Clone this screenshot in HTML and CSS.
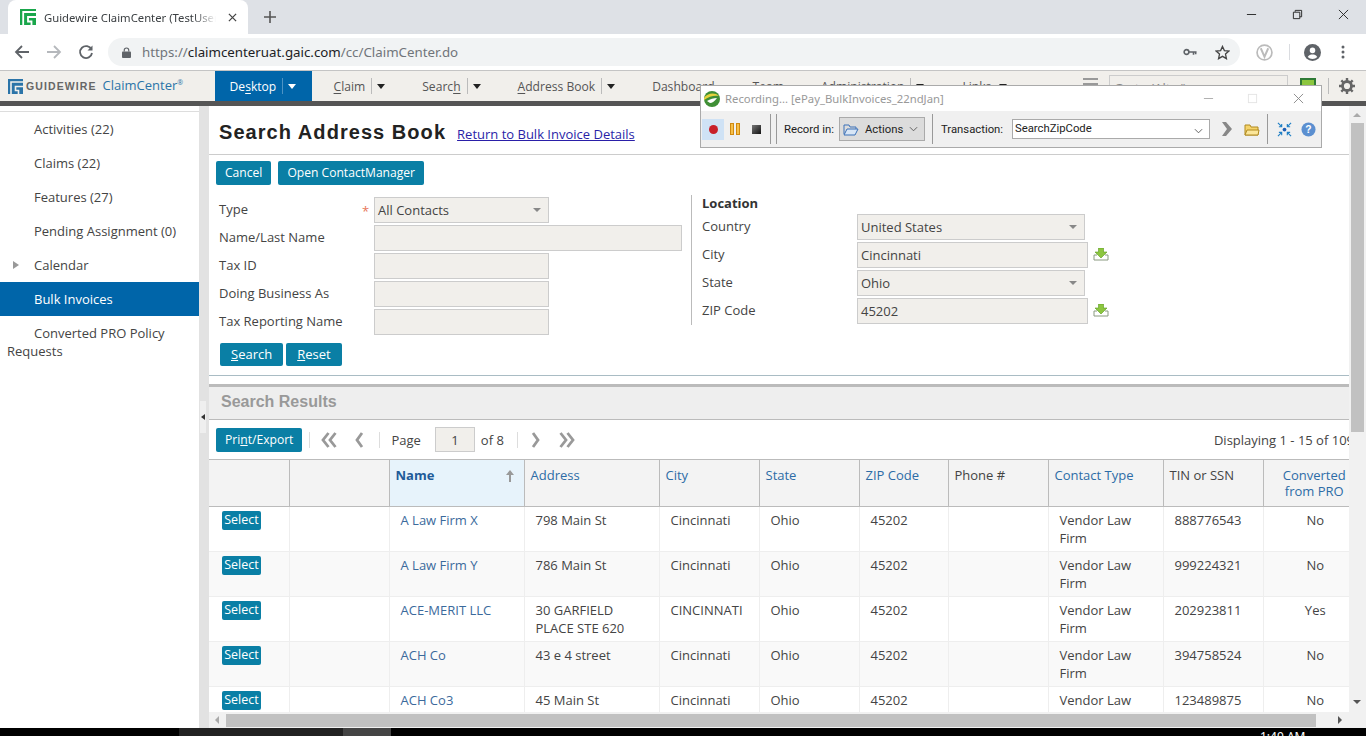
FILE: index.html
```html
<!DOCTYPE html>
<html>
<head>
	<title>Guidewire ClaimCenter</title>
	<link rel="stylesheet" href="styles.css">
</head>
<body>
	<!-- browser chrome -->
	<div class="tabstrip">
		<div class="tab">
			<svg class="favicon" viewBox="0 0 16 16"><rect width="16" height="16" fill="#1aa64b"/><path d="M16 3H3.200V16M16 8H8V12.500H11.500V16" fill="none" stroke="#fff" stroke-width="1.800"/></svg>
			<span class="tab-title">Guidewire ClaimCenter (TestUser</span>
			<svg class="tab-close" viewBox="0 0 10 10"><path d="M1 1l8 8M9 1l-8 8" stroke="#444" stroke-width="1.400"/></svg>
		</div>
		<svg class="tab-new" viewBox="0 0 12 12"><path d="M6 0v12M0 6h12" stroke="#555" stroke-width="1.600"/></svg>
		<div class="window-btns">
			<svg viewBox="0 0 12 12"><path d="M1 6h10" stroke="#222"/></svg>
			<svg viewBox="0 0 12 12"><path d="M3.500 3V1.500H10.500V8.500H8.500M1.500 3.500H8.500V10.500H1.500Z" fill="none" stroke="#222"/></svg>
			<svg viewBox="0 0 12 12"><path d="M1 1l10 10M11 1L1 11" stroke="#222"/></svg>
		</div>
	</div>
	<div class="toolbar">
		<svg class="tool-icon" viewBox="0 0 16 16"><path d="M15 8H2M8 2L2 8l6 6" fill="none" stroke="#5f6368" stroke-width="1.800"/></svg>
		<svg class="tool-icon" viewBox="0 0 16 16"><path d="M1 8h13M8 2l6 6-6 6" fill="none" stroke="#b5b8bc" stroke-width="1.800"/></svg>
		<svg class="tool-icon" viewBox="0 0 16 16"><path d="M13.500 5.500A6 6 0 1 0 14 9" fill="none" stroke="#5f6368" stroke-width="1.800"/><path d="M14.500 1.500V6.500H9.500Z" fill="#5f6368"/></svg>
		<div class="omnibox">
			<svg class="lock" viewBox="0 0 10 12"><path d="M2.500 5V3.500a2.500 2.500 0 0 1 5 0V5" fill="none" stroke="#5f6368" stroke-width="1.300"/><rect y="5" width="10" height="7" rx="1" fill="#5f6368"/></svg>
			<span class="url"><span class="url-dim">https://</span>claimcenteruat.gaic.com<span class="url-dim">/cc/ClaimCenter.do</span></span>
			<svg class="key" viewBox="0 0 16 8"><circle cx="4" cy="4" r="2.700" fill="none" stroke="#5f6368" stroke-width="1.800"/><path d="M6.500 4H15.500M12 4V7M14.500 4V6.500" stroke="#5f6368" stroke-width="1.800" fill="none"/></svg>
			<svg class="star" viewBox="0 0 16 16"><path d="M8 1.500l2 4.500 4.800.5-3.600 3.200 1 4.800L8 12.100 3.800 14.500l1-4.800L1.200 6.500 6 6z" fill="none" stroke="#444" stroke-width="1.400"/></svg>
		</div>
		<svg class="ext" viewBox="0 0 16 16"><circle cx="8" cy="8" r="7" fill="none" stroke="#bbb" stroke-width="1.600"/><path d="M4.500 4l3.500 8 3.500-8" fill="none" stroke="#bbb" stroke-width="1.800"/></svg>
		<span class="tool-sep"></span>
		<svg class="avatar" viewBox="0 0 16 16"><circle cx="8" cy="8" r="8" fill="#5f6368"/><circle cx="8" cy="6" r="2.600" fill="#fff"/><path d="M3.500 12.200C4.500 10.300 6.300 9.800 8 9.800s3.500.5 4.500 2.400A6 6 0 0 1 3.500 12.200Z" fill="#fff"/></svg>
		<svg class="kebab" viewBox="0 0 4 14"><circle cx="2" cy="2" r="1.500" fill="#5f6368"/><circle cx="2" cy="7" r="1.500" fill="#5f6368"/><circle cx="2" cy="12" r="1.500" fill="#5f6368"/></svg>
	</div>

	<!-- app header -->
	<div class="appbar">
		<svg class="gw-logo" viewBox="0 0 15 15"><rect width="15" height="15" fill="#2b74a8"/><path d="M15 3H3V15M15 7.500H7.500V11.500H10.500V15" fill="none" stroke="#f1efeb" stroke-width="1.600"/></svg>
		<span class="gw-word">GUIDEWIRE</span>
		<span class="gw-product">ClaimCenter<sup>®</sup></span>
		<div class="nav-item nav-active"><span>De<u>s</u>ktop</span><i class="nav-sep nav-sep-light"></i><i class="caret caret-white"></i></div>
		<div class="nav-item nav-claim"><span><u>C</u>laim</span><i class="nav-sep"></i><i class="caret"></i></div>
		<div class="nav-item nav-search"><span>Searc<u>h</u></span><i class="nav-sep"></i><i class="caret"></i></div>
		<div class="nav-item nav-book"><span><u>A</u>ddress Book</span><i class="nav-sep"></i><i class="caret"></i></div>
		<div class="nav-item nav-dash"><span>Dashboard</span></div>
		<div class="nav-item nav-team"><span>Team</span></div>
		<div class="nav-item nav-admin"><span>Administration</span><i class="nav-sep"></i><i class="caret"></i></div>
		<div class="nav-item nav-links"><span>Links</span><i class="caret caret-links"></i></div>
		<div class="app-tools">
			<div class="hamburger"><i></i><i></i><i></i></div>
			<div class="goto">Go to (Alt+/)</div>
			<span class="status-box"></span>
			<i class="nav-sep gear-sep"></i>
			<svg class="gear" viewBox="0 0 16 16"><circle cx="8" cy="8" r="4.500" fill="none" stroke="#666" stroke-width="2.800"/><path d="M8 0v3M8 13v3M0 8h3M13 8h3M2.300 2.300l2.200 2.200M11.500 11.500l2.200 2.200M13.700 2.300l-2.200 2.200M4.500 11.500l-2.200 2.200" stroke="#666" stroke-width="2.400"/></svg>
		</div>
	</div>
	<div class="app-strip"></div>

	<div class="workspace">
		<aside class="sidebar">
			<ul class="side-list">
				<li>Activities (22)</li>
				<li>Claims (22)</li>
				<li>Features (27)</li>
				<li>Pending Assignment (0)</li>
				<li class="side-arrow">Calendar</li>
				<li class="side-on">Bulk Invoices</li>
				<li class="side-wrap">Converted PRO Policy Requests</li>
			</ul>
		</aside>
		<div class="splitter"><span class="split-handle"></span></div>

		<div class="content-wrap">
			<div class="content-row">
				<main class="content">
					<div class="title-row">
						<h1>Search Address Book</h1>
						<a href="#">Return to Bulk Invoice Details</a>
					</div>
					<div class="btn-row">
						<span class="btn">Cancel</span>
						<span class="btn">Open ContactManager</span>
					</div>

					<div class="search-form">
						<div class="form-col form-left">
							<div class="field"><label>Type</label><b class="req">*</b><span class="input select w175">All Contacts</span></div>
							<div class="field"><label>Name/Last Name</label><span class="input w309"></span></div>
							<div class="field"><label>Tax ID</label><span class="input w175"></span></div>
							<div class="field"><label>Doing Business As</label><span class="input w175"></span></div>
							<div class="field"><label>Tax Reporting Name</label><span class="input w175"></span></div>
						</div>
						<div class="form-col form-right">
							<h4>Location</h4>
							<div class="field"><label>Country</label><span class="input select w228">United States</span></div>
							<div class="field"><label>City</label><span class="input w231">Cincinnati</span>
								<svg class="pick" viewBox="0 0 16 13"><path d="M4 7H1v5h14V7h-3" fill="none" stroke="#8a9a80"/><path d="M5.500 0h5v4H14L8 10 2 4h3.500z" fill="#8cc63f" stroke="#5a9a20" stroke-width=".6"/></svg></div>
							<div class="field"><label>State</label><span class="input select w228">Ohio</span></div>
							<div class="field"><label>ZIP Code</label><span class="input w231">45202</span>
								<svg class="pick" viewBox="0 0 16 13"><path d="M4 7H1v5h14V7h-3" fill="none" stroke="#8a9a80"/><path d="M5.500 0h5v4H14L8 10 2 4h3.500z" fill="#8cc63f" stroke="#5a9a20" stroke-width=".6"/></svg></div>
						</div>
					</div>
					<div class="search-btns">
						<span class="btn"><u>S</u>earch</span>
						<span class="btn"><u>R</u>eset</span>
					</div>

					<div class="results-head">Search Results</div>
					<div class="pager">
						<span class="btn">Pri<u>n</u>t/Export</span>
						<i class="pager-sep"></i>
						<svg class="pg pg-first" viewBox="0 0 16 16"><path d="M7.500 1L2 8l5.500 7M14.500 1L9 8l5.500 7" fill="none" stroke="#999" stroke-width="2.800"/></svg>
						<svg class="pg pg-prev" viewBox="0 0 9 16"><path d="M7 1L2 8l5 7" fill="none" stroke="#999" stroke-width="2.800"/></svg>
						<i class="pager-sep pager-sep2"></i>
						<span class="pg-text">Page</span>
						<span class="pg-num">1</span>
						<span class="pg-text">of 8</span>
						<i class="pager-sep pager-sep3"></i>
						<svg class="pg pg-next" viewBox="0 0 9 16"><path d="M2 1l5 7-5 7" fill="none" stroke="#999" stroke-width="2.800"/></svg>
						<svg class="pg pg-last" viewBox="0 0 16 16"><path d="M1.500 1L7 8l-5.500 7M8.500 1L14 8l-5.500 7" fill="none" stroke="#999" stroke-width="2.800"/></svg>
						<span class="pg-count">Displaying 1 - 15 of 109</span>
					</div>

					<table class="results">
						<colgroup>
							<col class="c80"><col class="c100"><col class="c135"><col class="c135"><col class="c100"><col class="c100"><col class="c89"><col class="c100"><col class="c115"><col class="c100"><col class="c100">
						</colgroup>
						<thead>
							<tr>
								<th></th><th></th>
								<th class="sorted"><a href="#">Name</a><span class="sort-arrow"></span></th>
								<th><a href="#">Address</a></th>
								<th><a href="#">City</a></th>
								<th><a href="#">State</a></th>
								<th><a href="#">ZIP Code</a></th>
								<th>Phone #</th>
								<th><a href="#">Contact Type</a></th>
								<th>TIN or SSN</th>
								<th class="center"><a href="#">Converted from PRO</a></th>
							</tr>
						</thead>
						<tbody>
							<tr>
								<td><span class="sel">Select</span></td><td></td><td><a href="#">A Law Firm X</a></td><td>798 Main St</td><td>Cincinnati</td><td>Ohio</td><td>45202</td><td></td><td>Vendor Law Firm</td><td>888776543</td><td class="center">No</td>
							</tr>
							<tr>
								<td><span class="sel">Select</span></td><td></td><td><a href="#">A Law Firm Y</a></td><td>786 Main St</td><td>Cincinnati</td><td>Ohio</td><td>45202</td><td></td><td>Vendor Law Firm</td><td>999224321</td><td class="center">No</td>
							</tr>
							<tr>
								<td><span class="sel">Select</span></td><td></td><td><a href="#">ACE-MERIT LLC</a></td><td>30 GARFIELD PLACE STE 620</td><td>CINCINNATI</td><td>Ohio</td><td>45202</td><td></td><td>Vendor Law Firm</td><td>202923811</td><td class="center">Yes</td>
							</tr>
							<tr>
								<td><span class="sel">Select</span></td><td></td><td><a href="#">ACH Co</a></td><td>43 e 4 street</td><td>Cincinnati</td><td>Ohio</td><td>45202</td><td></td><td>Vendor Law Firm</td><td>394758524</td><td class="center">No</td>
							</tr>
							<tr>
								<td><span class="sel">Select</span></td><td></td><td><a href="#">ACH Co3</a></td><td>45 Main St</td><td>Cincinnati</td><td>Ohio</td><td>45202</td><td></td><td>Vendor Law Firm</td><td>123489875</td><td class="center">No</td>
							</tr>
						</tbody>
					</table>
				</main>
				<div class="vscroll">
					<i class="arrow-up"></i>
					<span class="vthumb"></span>
					<i class="arrow-down"></i>
				</div>
			</div>
			<div class="hscroll">
				<i class="arrow-left"></i>
				<span class="hthumb"></span>
				<i class="arrow-right"></i>
			</div>
		</div>
	</div>

	<div class="taskbar">
		<span class="task-a"></span><span class="task-b"></span><span class="task-c"></span>
		<span class="task-time">1:49 AM</span>
	</div>

	<!-- recorder window sits over the app -->
	<div class="recorder">
		<div class="rec-title">
			<svg class="rec-logo" viewBox="0 0 16 16"><circle cx="8" cy="8" r="8" fill="#3f8f35"/><path d="M0 7C3 2 11 1 15 5 11 4 5 5 0 9Z" fill="#e6d23c"/><path d="M3 10c3-2 7-3 10-3-2 3-5 5-7 5z" fill="#fff"/></svg>
			<span class="rec-name">Recording... [ePay_BulkInvoices_22ndJan]</span>
			<svg class="rec-win rec-min" viewBox="0 0 12 12"><path d="M1 6h10" stroke="#aaa"/></svg>
			<svg class="rec-win rec-max" viewBox="0 0 12 12"><rect x="1.500" y="1.500" width="9" height="9" fill="none" stroke="#e4e4e4"/></svg>
			<svg class="rec-win rec-x" viewBox="0 0 12 12"><path d="M1 1l10 10M11 1L1 11" stroke="#888"/></svg>
		</div>
		<div class="rec-bar">
			<span class="rec-btn"><i class="rec-dot"></i></span>
			<span class="rec-pause"><i></i><i></i></span>
			<i class="rec-stop"></i>
			<i class="rec-sep"></i><i class="rec-sep rec-sep2"></i>
			<span class="rec-label">Record in:</span>
			<span class="rec-action">
				<svg class="rec-folder" viewBox="0 0 16 13"><path d="M1 11V2h5l1 2h6v2" fill="none" stroke="#3a70b8"/><path d="M1 12l3-6h11l-3 6z" fill="#d8e6f6" stroke="#3a70b8"/></svg>
				Actions
				<svg class="chev" viewBox="0 0 10 6"><path d="M1 1l4 4 4-4" fill="none" stroke="#555"/></svg>
			</span>
			<i class="rec-sep rec-sep3"></i>
			<span class="rec-label rec-label2">Transaction:</span>
			<span class="rec-input">SearchZipCode<svg class="chev" viewBox="0 0 10 6"><path d="M1 1l4 4 4-4" fill="none" stroke="#555"/></svg></span>
			<svg class="rec-go" viewBox="0 0 11 14"><path d="M1 0h4l6 7-6 7H1l5-7z" fill="#888"/></svg>
			<svg class="rec-open" viewBox="0 0 16 13"><path d="M1 12V2h5l1 2h7v8z" fill="#f5d36a" stroke="#b08a20"/><path d="M1 12l2-5h12l-1 5z" fill="#fbe69a" stroke="#b08a20"/></svg>
			<i class="rec-sep rec-sep4"></i>
			<svg class="rec-shrink" viewBox="0 0 16 16"><circle cx="8" cy="8" r="2" fill="#1f5fb5"/><path d="M1 1l4 4M5 2v3H2M15 1l-4 4M11 2v3h3M1 15l4-4M5 14v-3H2M15 15l-4-4M11 14v-3h3" fill="none" stroke="#1f7fc5" stroke-width="1.200"/></svg>
			<svg class="rec-help" viewBox="0 0 16 16"><circle cx="8" cy="8" r="7.500" fill="#5b8fd0"/><text x="8" y="12" text-anchor="middle" font-family="Liberation Sans" font-size="11" font-weight="700" fill="#fff">?</text></svg>
		</div>
	</div>
</body>
</html>
```

FILE: styles.css
```css
/* page */
html, body {
  margin: 0;
  padding: 0;
  height: 736px;
  overflow: hidden;
  background: #fff;
  font-family: "Open Sans", sans-serif;
  font-size: 13px;
  color: #444;
}

svg {
  display: block;
  flex: none;
}

/* browser tabs */
.tabstrip {
  height: 34px;
  background-color: #dee1e6;
  display: flex;
  align-items: flex-end;
}

.tab {
  width: 240px;
  height: 34px;
  margin-left: 8px;
  background-color: #fff;
  border-radius: 8px 8px 0 0;
  display: flex;
  align-items: center;
  box-sizing: border-box;
  padding-left: 12px;
}

.favicon {
  width: 16px;
  height: 16px;
}

.tab-title {
  width: 172px;
  margin-left: 8px;
  font-family: "Noto Sans", sans-serif;
  font-size: 11.300px;
  color: #3c4043;
  white-space: nowrap;
  overflow: hidden;
  -webkit-mask-image: linear-gradient(to right, #000 150px, transparent 172px);
}

.tab-close {
  width: 9px;
  height: 9px;
  margin-left: 12px;
}

.tab-new {
  width: 12px;
  height: 12px;
  margin: 0 0 11px 16px;
}

.window-btns {
  margin-left: auto;
  height: 34px;
  display: flex;
  align-items: flex-start;
}

.window-btns svg {
  width: 11px;
  height: 11px;
  margin: 9px 17px 0 18px;
}

/* browser toolbar */
.toolbar {
  height: 36px;
  background-color: #fff;
  display: flex;
  align-items: center;
  padding-left: 14px;
  box-sizing: border-box;
}

.tool-icon {
  width: 16px;
  height: 16px;
  margin-right: 16px;
}

.omnibox {
  width: 1132px;
  height: 28px;
  margin-left: -2px;
  background-color: #f1f3f4;
  border-radius: 14px;
  display: flex;
  align-items: center;
  padding-left: 14px;
  box-sizing: border-box;
}

.lock {
  width: 9px;
  height: 11px;
}

.url {
  margin-left: 11px;
  font-family: "Noto Sans", sans-serif;
  font-size: 13.300px;
  color: #202124;
}

.url-dim {
  color: #70757a;
}

.key {
  width: 14px;
  height: 8px;
  margin-left: auto;
}

.star {
  width: 15px;
  height: 15px;
  margin: 0 10px 0 18px;
}

.ext {
  width: 17px;
  height: 17px;
  margin-left: 16px;
}

.tool-sep {
  width: 1px;
  height: 16px;
  margin-left: 16px;
  background-color: #dadce0;
}

.avatar {
  width: 17px;
  height: 17px;
  margin-left: 14px;
}

.kebab {
  width: 4px;
  height: 14px;
  margin-left: 20px;
}

/* app header */
.appbar {
  height: 31px;
  box-sizing: border-box;
  border-top: 1px solid #c4c4c4;
  background-color: #f1efeb;
  display: flex;
  align-items: center;
  font-size: 12.100px;
  color: #555;
}

.app-strip {
  height: 5px;
  background-color: #555;
}

.gw-logo {
  width: 15px;
  height: 15px;
  margin-left: 8px;
}

.gw-word {
  margin-left: 3px;
  font-family: "Liberation Sans", sans-serif;
  font-size: 10.500px;
  font-weight: 700;
  letter-spacing: 1.100px;
  color: #666;
}

.gw-product {
  margin-left: 6px;
  width: 112px;
  font-size: 13px;
  color: #2b74a8;
  white-space: nowrap;
  position: relative;
  top: -1px;
}

.gw-product sup {
  font-size: 7px;
  line-height: 0;
}

.nav-item {
  height: 30px;
  display: flex;
  align-items: center;
  white-space: nowrap;
}

.nav-item u {
  text-underline-offset: 2px;
}

.nav-sep {
  width: 1px;
  height: 16px;
  margin-left: 6px;
  background-color: #bbb;
}

.nav-sep-light {
  background-color: #4d93c4;
}

.caret {
  width: 0;
  height: 0;
  margin-left: 5px;
  border-left: 4px solid transparent;
  border-right: 4px solid transparent;
  border-top: 5px solid #222;
}

.caret-white {
  border-top-color: #fff;
}

.caret-links {
  margin-left: 8px;
}

.nav-active {
  width: 97px;
  box-sizing: border-box;
  padding-left: 15px;
  background-color: #0065a9;
  color: #fff;
}

.nav-claim { margin-left: 22px; }
.nav-search { margin-left: 37px; }
.nav-book { margin-left: 37px; }
.nav-dash { margin-left: 37px; }
.nav-team { margin-left: 38px; }
.nav-admin { margin-left: 37px; }
.nav-links { margin-left: 38px; }

.app-tools {
  margin-left: auto;
  padding-right: 11px;
  display: flex;
  align-items: center;
}

.hamburger {
  width: 15px;
  position: relative;
  top: -1px;
}

.hamburger i {
  display: block;
  height: 2px;
  margin-bottom: 3px;
  background-color: #999;
}

.goto {
  width: 179px;
  height: 26px;
  margin-left: 11px;
  box-sizing: border-box;
  border: 1px solid #ccc;
  padding: 3px 4px;
  color: #888;
  font-size: 13px;
  position: relative;
  top: 2px;
}

.status-box {
  width: 16px;
  height: 16px;
  margin-left: 12px;
  background-color: #8cc63f;
  border: 2px solid #2f7a35;
  box-sizing: border-box;
}

.gear-sep {
  margin-left: 12px;
}

.gear {
  width: 16px;
  height: 16px;
  margin-left: 10px;
}

/* below header */
.workspace {
  height: 622px;
  display: flex;
}

.sidebar {
  width: 199px;
  flex: none;
  box-sizing: border-box;
  padding-top: 5px;
  background-color: #fff;
}

.side-list {
  margin: 0;
  padding: 0;
  list-style-type: none;
  border-top: 1px solid #ddd;
}

.side-list li {
  height: 34px;
  line-height: 34px;
  padding-left: 34px;
  box-sizing: border-box;
  white-space: nowrap;
  position: relative;
}

.side-list .side-on {
  background-color: #0065a9;
  color: #fff;
}

.side-list .side-wrap {
  height: auto;
  padding: 8px 30px 0 7px;
  line-height: 18px;
  text-indent: 27px;
  white-space: normal;
}

.side-arrow::before {
  content: "";
  position: absolute;
  left: 13px;
  top: 13px;
  border-top: 4px solid transparent;
  border-bottom: 4px solid transparent;
  border-left: 6px solid #999;
}

.splitter {
  width: 10px;
  flex: none;
  background-color: #e2e2e2;
  display: flex;
  align-items: center;
}

.split-handle {
  width: 6px;
  height: 32px;
  margin-left: 1px;
  background-color: #efefef;
  position: relative;
}

.split-handle::after {
  content: "";
  position: absolute;
  left: 1px;
  top: 13px;
  border-top: 3px solid transparent;
  border-bottom: 3px solid transparent;
  border-right: 4px solid #333;
}

.content-wrap {
  flex: 1;
  min-width: 0;
  display: flex;
  flex-direction: column;
}

.content-row {
  height: 606px;
  display: flex;
}

.content {
  width: 1140px;
  flex: none;
  overflow: hidden;
  background-color: #fff;
}

/* title */
.title-row {
  height: 49px;
  box-sizing: border-box;
  border-bottom: 1px solid #ccc;
  display: flex;
  align-items: baseline;
  padding: 15px 0 0 10px;
}

.title-row h1 {
  margin: 0;
  font-family: "Liberation Sans", sans-serif;
  font-size: 20px;
  font-weight: 700;
  letter-spacing: 1.050px;
  color: #222;
}

.title-row a {
  margin-left: 11px;
  color: #2a1fa8;
}

/* buttons */
.btn {
  display: inline-block;
  height: 24px;
  line-height: 23px;
  padding: 0 9px;
  background-color: #0a7fa5;
  border-radius: 2px;
  color: #fff;
  font-size: 12.100px;
  white-space: nowrap;
}

.btn-row {
  height: 24px;
  padding: 6px 0 0 7px;
  display: flex;
  gap: 7px;
}

/* search form */
.search-form {
  height: 155px;
  padding-top: 12px;
  display: flex;
  box-sizing: border-box;
}

.form-col label {
  flex: none;
}

.form-left {
  width: 472px;
  padding-left: 10px;
  flex: none;
  box-sizing: border-box;
}

.form-right {
  border-left: 1px solid #bbb;
  height: 130px;
  margin: -2px 0 0 10px;
  padding-left: 10px;
  flex: 1;
}

.form-right h4 {
  margin: 0;
  height: 19px;
  font-size: 13px;
  line-height: 16px;
  font-weight: 700;
  color: #333;
}

.field {
  height: 28px;
  display: flex;
  align-items: flex-start;
  position: relative;
}

.form-left label {
  width: 155px;
  line-height: 24px;
}

.form-right label {
  width: 155px;
  line-height: 24px;
}

.req {
  position: absolute;
  left: 143px;
  top: 6px;
  color: #e8785a;
  font-weight: 400;
  line-height: 16px;
}

.input {
  display: block;
  height: 26px;
  box-sizing: border-box;
  border: 1px solid #ccc;
  background-color: #f1efeb;
  line-height: 25px;
  padding-left: 3px;
  flex: none;
  position: relative;
}

.w175 { width: 175px; }
.w309 { width: 308px; }
.w228 { width: 228px; }
.w231 { width: 231px; }

.select::after {
  content: "";
  position: absolute;
  right: 7px;
  top: 10px;
  border-left: 4px solid transparent;
  border-right: 4px solid transparent;
  border-top: 4px solid #888;
}

.pick {
  width: 16px;
  height: 13px;
  margin: 6px 0 0 5px;
}

.search-btns {
  height: 23px;
  padding: 3px 0 0 11px;
  display: flex;
  gap: 3px;
}

.search-btns .btn {
  height: 23px;
  line-height: 22px;
  padding: 0 11px;
  font-size: 13px;
}

/* results */
.results-head {
  height: 45px;
  margin-top: 9px;
  padding: 11px 0 0 12px;
  box-sizing: border-box;
  border-top: 1px solid #a9bcc4;
  border-bottom: 1px solid #bbb;
  background: linear-gradient(#fff 8px, #bbb 8px, #bbb 11px, #eee 11px);
  font-family: "Liberation Sans", sans-serif;
  font-size: 16px;
  font-weight: 700;
  line-height: 30px;
  color: #999;
}

.pager {
  height: 39px;
  padding-left: 7px;
  display: flex;
  align-items: center;
  white-space: nowrap;
}

.pager-sep {
  width: 1px;
  height: 16px;
  margin-left: 7px;
  background-color: #ddd;
}

.pager-sep2 { margin-left: 15px; }
.pager-sep3 { margin-left: 13px; }

.pg {
  height: 16px;
}

.pg-first { width: 16px; margin-left: 11px; }
.pg-prev { width: 9px; margin-left: 18px; }
.pg-next { width: 9px; margin-left: 13px; }
.pg-last { width: 16px; margin-left: 19px; }

.pg-text {
  margin-left: 11px;
}

.pg-num {
  width: 40px;
  height: 25px;
  margin-left: 14px;
  box-sizing: border-box;
  border: 1px solid #ccc;
  background-color: #f1efeb;
  line-height: 24px;
  text-align: center;
}

.pg-num + .pg-text {
  margin-left: 6px;
}

.pg-count {
  margin-left: auto;
  margin-right: -5px;
}

.results {
  width: 1154px;
  table-layout: fixed;
  border-collapse: collapse;
  border-top: 1px solid #bbb;
}

.c80 { width: 80px; }
.c100 { width: 100px; }
.c135 { width: 135px; }
.c89 { width: 89px; }
.c115 { width: 115px; }

.results th {
  height: 46px;
  box-sizing: border-box;
  padding: 7px 6px;
  background-color: #f3f3f3;
  border-left: 1px solid #bbb;
  border-bottom: 1px solid #bbb;
  font-weight: 400;
  line-height: 16px;
  text-align: left;
  vertical-align: top;
  position: relative;
}

.results th:first-child,
.results td:first-child {
  border-left: none;
}

.results th.sorted {
  background-color: #e7f3fb;
}

.results th.sorted a {
  font-weight: 700;
  color: #1f5b99;
}

.sort-arrow {
  position: absolute;
  right: 10px;
  top: 10px;
  width: 8px;
  height: 12px;
  background: linear-gradient(#999, #999) center 3px / 2px 9px no-repeat;
}

.sort-arrow::before {
  content: "";
  position: absolute;
  left: 0;
  top: 0;
  border-left: 4px solid transparent;
  border-right: 4px solid transparent;
  border-bottom: 5px solid #999;
}

.results a {
  color: #3b6a9c;
  text-decoration: none;
}

.results th a {
  color: #2d6ca6;
}

.results td {
  height: 45px;
  box-sizing: border-box;
  padding: 4px 11px 0;
  border-left: 1px solid #eee;
  border-bottom: 1px solid #eee;
  line-height: 18px;
  vertical-align: top;
  overflow: hidden;
}

.results td:first-child {
  padding: 4px 0 0 13px;
}

.results tbody tr:nth-child(even) td {
  background-color: #f9f9f9;
}

.results td.center {
  padding: 4px 9px 0 13px;
  text-align: center;
}

.results th.center {
  padding-right: 14px;
  padding-left: 16px;
  text-align: center;
}

.sel {
  display: block;
  width: 39px;
  height: 19px;
  background-color: #0a7fa5;
  border-radius: 2px;
  color: #fff;
  font-size: 12.500px;
  line-height: 18px;
  text-align: center;
}

/* scrollbars */
.vscroll {
  width: 17px;
  flex: none;
  background-color: #f1f1f1;
  position: relative;
  box-sizing: border-box;
  padding-top: 17px;
}

.vthumb {
  display: block;
  width: 13px;
  height: 309px;
  margin-left: 2px;
  background-color: #c1c1c1;
}

.arrow-up,
.arrow-down {
  position: absolute;
  left: 4px;
  width: 0;
  height: 0;
  border-left: 4px solid transparent;
  border-right: 4px solid transparent;
}

.arrow-up {
  top: 7px;
  border-bottom: 4px solid #aaa;
}

.arrow-down {
  bottom: 8px;
  border-top: 4px solid #555;
}

.hscroll {
  height: 16px;
  background-color: #f1f1f1;
  display: flex;
  align-items: center;
  position: relative;
}

.hthumb {
  display: block;
  width: 1090px;
  height: 13px;
  margin-left: 17px;
  background-color: #c1c1c1;
}

.arrow-left,
.arrow-right {
  position: absolute;
  top: 4px;
  width: 0;
  height: 0;
  border-top: 4px solid transparent;
  border-bottom: 4px solid transparent;
}

.arrow-left {
  left: 6px;
  border-right: 4px solid #aaa;
}

.arrow-right {
  left: 1129px;
  border-left: 4px solid #555;
}

/* windows taskbar, cut off by the window */
.taskbar {
  height: 8px;
  background-color: #000;
  display: flex;
  overflow: hidden;
}

.task-a { width: 179px; }

.task-b {
  width: 164px;
  background-color: #222;
}

.task-c {
  width: 48px;
  background-color: #444;
}

.task-time {
  margin: 3px 0 0 869px;
  color: #fff;
  font-family: "Noto Sans", sans-serif;
  font-size: 12px;
  line-height: 12px;
  white-space: nowrap;
}

/* recorder window */
.recorder {
  position: absolute;
  left: 700px;
  top: 85px;
  width: 622px;
  height: 63px;
  box-sizing: border-box;
  border: 1px solid #aaa;
  background-color: #f0f0f0;
  font-family: Roboto, sans-serif;
  font-size: 11.300px;
  color: #222;
}

.rec-title {
  height: 25px;
  background-color: #fff;
  display: flex;
  align-items: center;
  padding-left: 3px;
}

.rec-logo {
  width: 16px;
  height: 16px;
}

.rec-name {
  margin-left: 5px;
  font-family: "Noto Sans", sans-serif;
  color: #999;
}

.rec-win {
  width: 11px;
  height: 11px;
}

.rec-min { margin-left: auto; }
.rec-max { margin-left: 33px; }
.rec-x { margin: 0 17px 0 35px; }

.rec-bar {
  height: 36px;
  display: flex;
  align-items: center;
  padding-left: 1px;
}

.rec-btn {
  width: 22px;
  height: 21px;
  background-color: #cfe2f5;
  display: flex;
  align-items: center;
  justify-content: center;
}

.rec-dot {
  width: 9px;
  height: 9px;
  border-radius: 50%;
  background-color: #c8202a;
}

.rec-pause {
  display: flex;
  gap: 2px;
  margin-left: 6px;
}

.rec-pause i {
  width: 2px;
  height: 10px;
  background-color: #f7c04a;
  border: 1px solid #d08a10;
}

.rec-stop {
  width: 9px;
  height: 9px;
  margin-left: 12px;
  background: linear-gradient(135deg, #777, #111);
}

.rec-sep {
  width: 1px;
  height: 30px;
  margin-left: 9px;
  background-color: #999;
}

.rec-sep2 {
  margin-left: 5px;
}

.rec-label {
  width: 49px;
  margin-left: 7px;
  white-space: nowrap;
}

.rec-label2 {
  width: 60px;
  margin-left: 8px;
}

.rec-action {
  width: 86px;
  height: 24px;
  margin-left: 6px;
  box-sizing: border-box;
  border: 1px solid #aaa;
  background-color: #dcdcdc;
  display: flex;
  align-items: center;
  padding-left: 3px;
  gap: 6px;
  position: relative;
}

.rec-folder {
  width: 16px;
  height: 13px;
}

.chev {
  position: absolute;
  right: 6px;
  top: 8px;
  width: 9px;
  height: 6px;
}

.rec-sep3 {
  margin-left: 7px;
}

.rec-input {
  width: 198px;
  height: 20px;
  margin-left: 11px;
  box-sizing: border-box;
  border: 1px solid #aaa;
  background-color: #fff;
  padding-left: 2px;
  line-height: 18px;
  position: relative;
}

.rec-go {
  width: 11px;
  height: 14px;
  margin-left: 11px;
}

.rec-open {
  width: 16px;
  height: 13px;
  margin-left: 12px;
}

.rec-sep4 {
  margin-left: 7px;
}

.rec-shrink {
  width: 15px;
  height: 15px;
  margin-left: 9px;
}

.rec-help {
  width: 15px;
  height: 15px;
  margin-left: 9px;
}
```
